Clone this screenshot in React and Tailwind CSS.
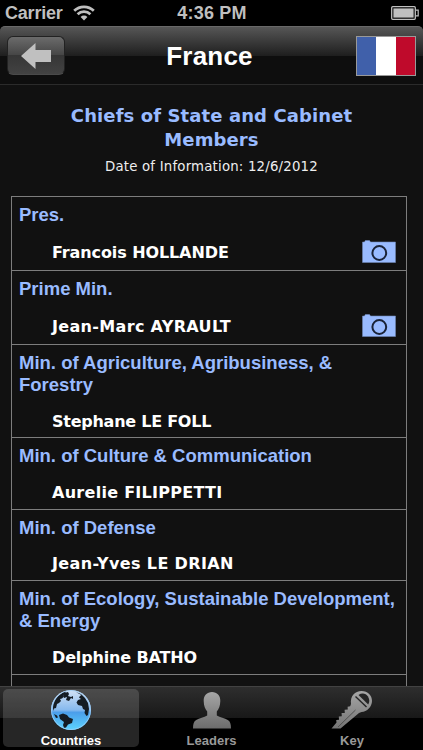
import React from 'react';

const rows = [
  { title: ['Pres.'], name: 'Francois HOLLANDE', photo: true, height: 'h-[74px]', gap: 'mt-[17px]', tracking: 'tracking-[-0.1px]' },
  { title: ['Prime Min.'], name: 'Jean-Marc AYRAULT', photo: true, height: 'h-[74px]', gap: 'mt-[17px]', tracking: 'tracking-[0.33px]' },
  { title: ['Min. of Agriculture, Agribusiness, &', 'Forestry'], name: 'Stephane LE FOLL', height: 'h-[93px]', gap: 'mt-4', tracking: 'tracking-[-0.25px]' },
  { title: ['Min. of Culture & Communication'], name: 'Aurelie FILIPPETTI', height: 'h-[72px]', gap: 'mt-4', tracking: 'tracking-[0.28px]' },
  { title: ['Min. of Defense'], name: 'Jean-Yves LE DRIAN', height: 'h-[71px]', gap: 'mt-[15px]', tracking: 'tracking-[0.36px]' },
  { title: ['Min. of Ecology, Sustainable Development,', '& Energy'], name: 'Delphine BATHO', height: 'h-[94px]', gap: 'mt-4', tracking: 'tracking-[-0.15px]' },
];

const CameraIcon = () => (
  <svg width="34" height="23" viewBox="0 0 34 23" className="-mt-1 shrink-0">
    <path d="M0.5 2h2l.8-1.5h4.2L8.5 2h25v20.500h-33z" fill="#99bbff" stroke="#6e86b5" strokeWidth="0.6" />
    <circle cx="17.3" cy="13" r="6.9" fill="none" stroke="#1a2338" strokeWidth="2" />
  </svg>
);

const WifiIcon = () => (
  <svg width="22" height="16" viewBox="0 0 22 16" fill="none" stroke="#bfbfbf" strokeWidth="2.7">
    <path d="M1.2 5.8a14 14 0 0 1 19.6 0" />
    <path d="M4.6 9.3a9 9 0 0 1 12.8 0" />
    <path d="M11 15.5 7.6 12a4.8 4.8 0 0 1 6.8 0z" fill="#bfbfbf" stroke="none" />
  </svg>
);

const BatteryIcon = () => (
  <svg width="28" height="14" viewBox="0 0 28 14">
    <rect x="0.7" y="0.7" width="23.6" height="12.6" rx="1" fill="none" stroke="#bfbfbf" strokeWidth="1.3" />
    <rect x="2.4" y="2.4" width="20.2" height="9.2" fill="#bfbfbf" />
    <path d="M25 4.2h2.2v5.6H25" fill="none" stroke="#bfbfbf" strokeWidth="1.2" />
  </svg>
);

const GlobeIcon = () => (
  <svg width="42" height="42" viewBox="0 0 42 42">
    <defs>
      <linearGradient id="sea" x1="0" y1="0" x2="0" y2="1">
        <stop offset="0" stopColor="#d3e2f5" />
        <stop offset="0.5" stopColor="#86b9ee" />
        <stop offset="0.56" stopColor="#4b9eea" />
        <stop offset="1" stopColor="#5cd4ff" />
      </linearGradient>
    </defs>
    <circle cx="21" cy="21" r="20" fill="url(#sea)" />
    <g fill="#141c24">
      <path d="M3 18C4 11 8 6 14 3l2-.5-1 2-2 2 1 1-2 2-2 .5 1 2-2 2-2 1-1 4-2 .5-1 2.5z" />
      <path d="m14 4 4-1 1 2-1 2 3 1 2-1v3l-2-1-2 3-3-1 1-3-3 1-1-3z" />
      <path d="M26 3l5 2 4 4 3 5 1 6-1 6-1.500 1-2-3 .5-3-2-1-1-3-4-1-1.500-2.500 1.500-2.500 3-1-2-1.500 1-1.500 1.500-1-3-1.500z" />
      <path d="m9 26 4-1.500 4 1.500 2 2.500 4 1.500-1 4-4 1.500-2 3-2 .5-1-3 1-3-4-3z" />
      <path d="M4 25l3 1.500 1 2-2 .5z" />
    </g>
    <circle cx="21" cy="21" r="19.500" fill="none" stroke="#9fd0fa" strokeWidth="0.8" />
  </svg>
);

const LeaderIcon = () => (
  <svg width="40" height="38" viewBox="0 0 40 38">
    <defs>
      <linearGradient id="bust" x1="0" y1="0" x2="0" y2="1">
        <stop offset="0" stopColor="#a6a6a6" />
        <stop offset="1" stopColor="#6c6c6c" />
      </linearGradient>
    </defs>
    <path d="M20 1c5 0 8.500 3.500 8.300 9-.1 5-1.500 8-3.500 10.500v4c3 2 8 2.500 11 4.500 2.500 1.500 3.200 4 3.200 8.500H1C1 33 1.700 30.500 4.200 29c3-2 8-2.500 11-4.500v-4C13.200 18 11.800 15 11.700 10 11.500 4.500 15 1 20 1z" fill="url(#bust)" />
  </svg>
);

const KeyIcon = () => (
  <svg width="42" height="42" viewBox="0 0 42 42">
    <defs>
      <linearGradient id="metal" x1="0" y1="0" x2="0" y2="1">
        <stop offset="0" stopColor="#a6a6a6" />
        <stop offset="1" stopColor="#747474" />
      </linearGradient>
    </defs>
    {/* bow, then the toothed blade */}
    <path
      d="M20 15C19 7 24 2 30.500 2c6.500 0 10.500 4.500 10.500 10s-5 11-10.500 11l-2.500 1L9.500 39.500H.5l5-6-.3-2.500 2.800-.3-.2-3.200 3-.2-.2-3.200 3.200-.2-.2-3.200 3.200-.2-.2-2.800 2.600-.5z"
      fill="url(#metal)"
    />
    <path d="M27.500 6C31 3.500 35 4.500 37 7.500c1.700 3 1.700 5.500.2 8z" fill="#242424" />
    <path d="m24.500 7.500 11 10.500" stroke="#242424" strokeWidth="1.400" />
    <path d="M24.500 21 7 38" stroke="#4a4a4a" strokeWidth="0.900" />
  </svg>
);

const tabs = [
  { label: 'Countries', icon: <GlobeIcon />, active: true },
  { label: 'Leaders', icon: <LeaderIcon /> },
  { label: 'Key', icon: <KeyIcon /> },
];

export default function App() {
  return (
    <div className="flex h-[750px] w-[423px] flex-col overflow-hidden bg-black font-['Liberation_Sans',sans-serif]">
      {/* Status bar */}
      <div className="grid h-[26px] shrink-0 grid-cols-3 items-center pl-[5px] pr-[4px] text-[18px] font-bold leading-[26px] text-[#bfbfbf]">
        <div className="flex items-center gap-[10px]">
          <span className="tracking-[-0.2px]">Carrier</span>
          <WifiIcon />
        </div>
        <div className="text-center tracking-[0.2px]">4:36 PM</div>
        <div className="flex justify-end">
          <BatteryIcon />
        </div>
      </div>

      {/* Navigation bar */}
      <div className="flex h-[58px] shrink-0 items-center justify-between rounded-t-[5px] border-t border-[#696969] bg-[linear-gradient(#565656_0,#1e1e1e_29px,#0e0e0e_29px,#0e0e0e_100%)] pl-[7px] pr-[7px]">
        <button className="flex h-[39px] w-[58px] items-center justify-center rounded-[6px] border border-[#222] border-b-[#4a4a4a] bg-[linear-gradient(#6b6b6b,#454545_50%,#363636_50%,#424242)]">
          <svg width="30" height="26" viewBox="0 0 30 26">
            <path d="M0 13 14.500 0v7H30v12H14.500v7z" fill="#c0c0c0" />
          </svg>
        </button>
        <h1 className="pr-0.5 text-[26px] font-bold leading-[56px] tracking-[0.2px] text-white">France</h1>
        <div className="flex h-10 w-[60px] border border-[#999]">
          <div className="flex-1 bg-[#4060aa]" />
          <div className="flex-1 bg-white" />
          <div className="flex-1 bg-[#bf0a2b]" />
        </div>
      </div>

      {/* Cabinet list */}
      <div className="min-h-0 flex-1 overflow-hidden border-t border-[#2b2b2b] bg-[#111]">
        <h2 className="pt-[19px] text-center font-['DejaVu_Sans',sans-serif] text-[18px] font-bold leading-6 tracking-[0.1px] text-[#99bbff]">
          Chiefs of State and Cabinet
          <br />
          Members
        </h2>
        <p className="mt-[5px] text-center font-['DejaVu_Sans',sans-serif] text-[13.3px] leading-[20px] tracking-[0.2px] text-[#eee]">
          Date of Information: 12/6/2012
        </p>
        <div className="ml-[11px] mr-[16px] mt-[19px] border-x border-[#7d7d7d]">
          {rows.map((row) => (
            <div key={row.name} className={`border-t border-[#7d7d7d] pl-[7px] pr-[10px] pt-[7px] ${row.height}`}>
              <div className="whitespace-nowrap text-[18.5px] font-bold leading-[22px] text-[#99bbff]">
                {row.title.map((line) => (
                  <div key={line}>{line}</div>
                ))}
              </div>
              <div className={`flex h-5 items-center justify-between pl-[33px] ${row.gap}`}>
                <span className={`font-['DejaVu_Sans',sans-serif] text-[16px] font-bold leading-5 text-white ${row.tracking}`}>
                  {row.name}
                </span>
                {row.photo && <CameraIcon />}
              </div>
            </div>
          ))}
          <div className="h-[40px] border-t border-[#7d7d7d]" />
        </div>
      </div>

      {/* Tab bar */}
      <div className="flex h-[64px] shrink-0 justify-between border-t border-[#424242] bg-[linear-gradient(#2e2e2e_0,#181818_31px,#000_31px,#000_100%)] px-[3px] pb-[3px] pt-[2px]">
        {tabs.map((tab) => (
          <div
            key={tab.label}
            className={`flex w-[136px] flex-col items-center rounded-[5px] ${tab.active ? 'bg-white/15 text-white' : 'text-[#999]'}`}
          >
            <div className="flex h-[42px] shrink-0 items-center justify-center">{tab.icon}</div>
            <span className="mt-px text-[13px] font-bold leading-[17px]">{tab.label}</span>
          </div>
        ))}
      </div>
    </div>
  );
}
